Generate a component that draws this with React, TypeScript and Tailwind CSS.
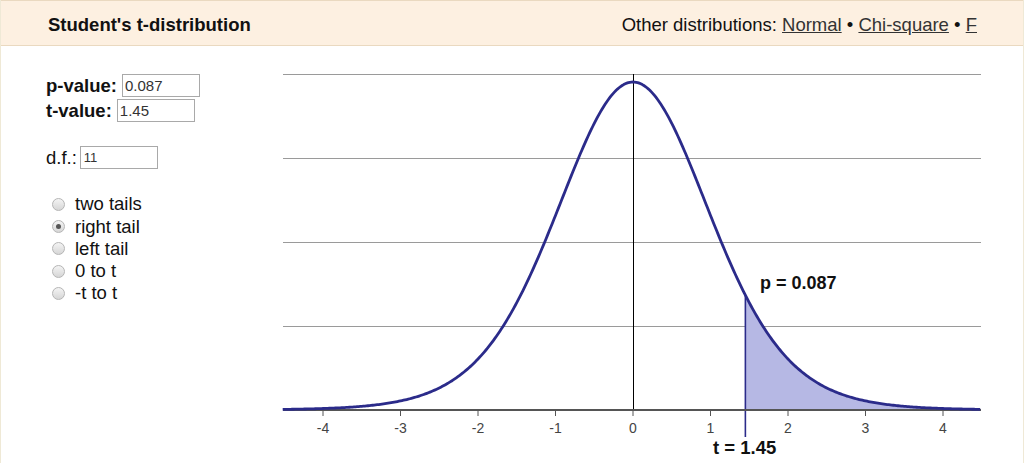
import React from 'react';

// t-distribution pdf, df = 11
const DF = 11;
const C = 0.38999;
const pdf = (t: number) => C * Math.pow(1 + (t * t) / DF, -(DF + 1) / 2);

const X0 = 633;
const XS = 77.5;
const Y0 = 410;
const YS = 841;
const px = (t: number) => X0 + t * XS;
const py = (d: number) => Y0 - d * YS;

const T_VALUE = 1.45;
const FONT = "'Liberation Sans', Arial, sans-serif";

const buildCurve = (from: number, to: number, step = 0.02) => {
  const pts: string[] = [];
  for (let t = from; t <= to + 1e-9; t += step) {
    pts.push(`${px(t).toFixed(2)},${py(pdf(t)).toFixed(2)}`);
  }
  return pts;
};

const Radio = ({ label, checked }: { label: string; checked?: boolean }) => (
  <label className="flex items-center h-[22.3px]">
    <span className="w-[13px] h-[13px] rounded-full border border-[#b5b5b5] bg-gradient-to-b from-[#f4f4f4] to-[#d6d6d6] flex items-center justify-center ml-[6px] mr-[10px]">
      {checked && <span className="w-[5px] h-[5px] rounded-full bg-[#555]" />}
    </span>
    <span>{label}</span>
  </label>
);

const Chart = () => {
  const curve = buildCurve(-4.52, 4.49);
  const tail = buildCurve(T_VALUE, 4.49);
  const tailPath = `M${px(T_VALUE)},${Y0} L${tail.join(' L')} L${px(4.49)},${Y0} Z`;
  const ticks = [-4, -3, -2, -1, 0, 1, 2, 3, 4];
  const grid = [0.1, 0.2, 0.3, 0.4];

  return (
    <svg width={740} height={417} viewBox="270 46 740 417" className="block">
      {grid.map((g) => (
        <line key={g} x1={283} x2={981} y1={Math.round(py(g)) + 0.5} y2={Math.round(py(g)) + 0.5} stroke="#9a9a9a" strokeWidth={1} />
      ))}
      <path d={tailPath} fill="#b6b8e4" />
      <line x1={X0 + 0.5} x2={X0 + 0.5} y1={74} y2={Y0} stroke="#000" strokeWidth={1} />
      <line x1={px(T_VALUE)} x2={px(T_VALUE)} y1={py(pdf(T_VALUE))} y2={437} stroke="#2b2b8a" strokeWidth={1.6} />
      <line x1={283} x2={981} y1={Y0} y2={Y0} stroke="#555" strokeWidth={2} />
      {ticks.map((t) => (
        <g key={t}>
          <line x1={px(t)} x2={px(t)} y1={Y0} y2={416} stroke="#555" strokeWidth={1} />
          <text x={px(t)} y={433} textAnchor="middle" fontSize={14} fill="#444" fontFamily={FONT}>
            {t}
          </text>
        </g>
      ))}
      <polyline points={curve.join(' ')} fill="none" stroke="#2b2b8a" strokeWidth={2.8} strokeLinejoin="round" />
      <text x={760} y={289} fontSize={18} fontWeight="bold" fill="#111" fontFamily={FONT}>
        p = 0.087
      </text>
      <text x={713} y={454} fontSize={18.5} fontWeight="bold" fill="#111" fontFamily={FONT}>
        t = 1.45
      </text>
    </svg>
  );
};

const App = () => {
  return (
    <div className="w-[1024px] h-[463px] overflow-hidden bg-white text-[#111] font-['Liberation_Sans',Arial,sans-serif] text-[18.5px] border-l border-r border-[#efe9d6]">
      <div className="h-[46px] bg-[#fdf0e1] border-t border-b border-[#ead9c0] flex items-center justify-between pl-[47px] pr-[46px] pt-[3px]">
        <div className="font-bold">Student's t-distribution</div>
        <div>
          Other distributions: <a className="underline text-[#333]">Normal</a> • <a className="underline text-[#333]">Chi-square</a> • <a className="underline text-[#333]">F</a>
        </div>
      </div>
      <div className="flex">
        <div className="w-[269px] pl-[45px] pt-[28px] shrink-0">
          <div className="flex items-center h-[23px]">
            <span className="font-bold mr-[5px]">p-value:</span>
            <input readOnly value="0.087" className="w-[78px] h-[23px] border border-[#a9a9a9] px-[2px] text-[15px] text-[#333] outline-none" />
          </div>
          <div className="flex items-center h-[23px] mt-[2px]">
            <span className="font-bold mr-[5px]">t-value:</span>
            <input readOnly value="1.45" className="w-[78px] h-[23px] border border-[#a9a9a9] px-[2px] text-[15px] text-[#333] outline-none" />
          </div>
          <div className="flex items-center h-[23px] mt-[24px]">
            <span className="mr-[3px]">d.f.:</span>
            <input readOnly value="11" className="w-[78px] h-[23px] border border-[#a9a9a9] px-[3px] text-[13px] text-[#333] outline-none" />
          </div>
          <div className="mt-[24px] flex flex-col">
            <Radio label="two tails" />
            <Radio label="right tail" checked />
            <Radio label="left tail" />
            <Radio label="0 to t" />
            <Radio label="-t to t" />
          </div>
        </div>
        <Chart />
      </div>
    </div>
  );
};

export default App;
